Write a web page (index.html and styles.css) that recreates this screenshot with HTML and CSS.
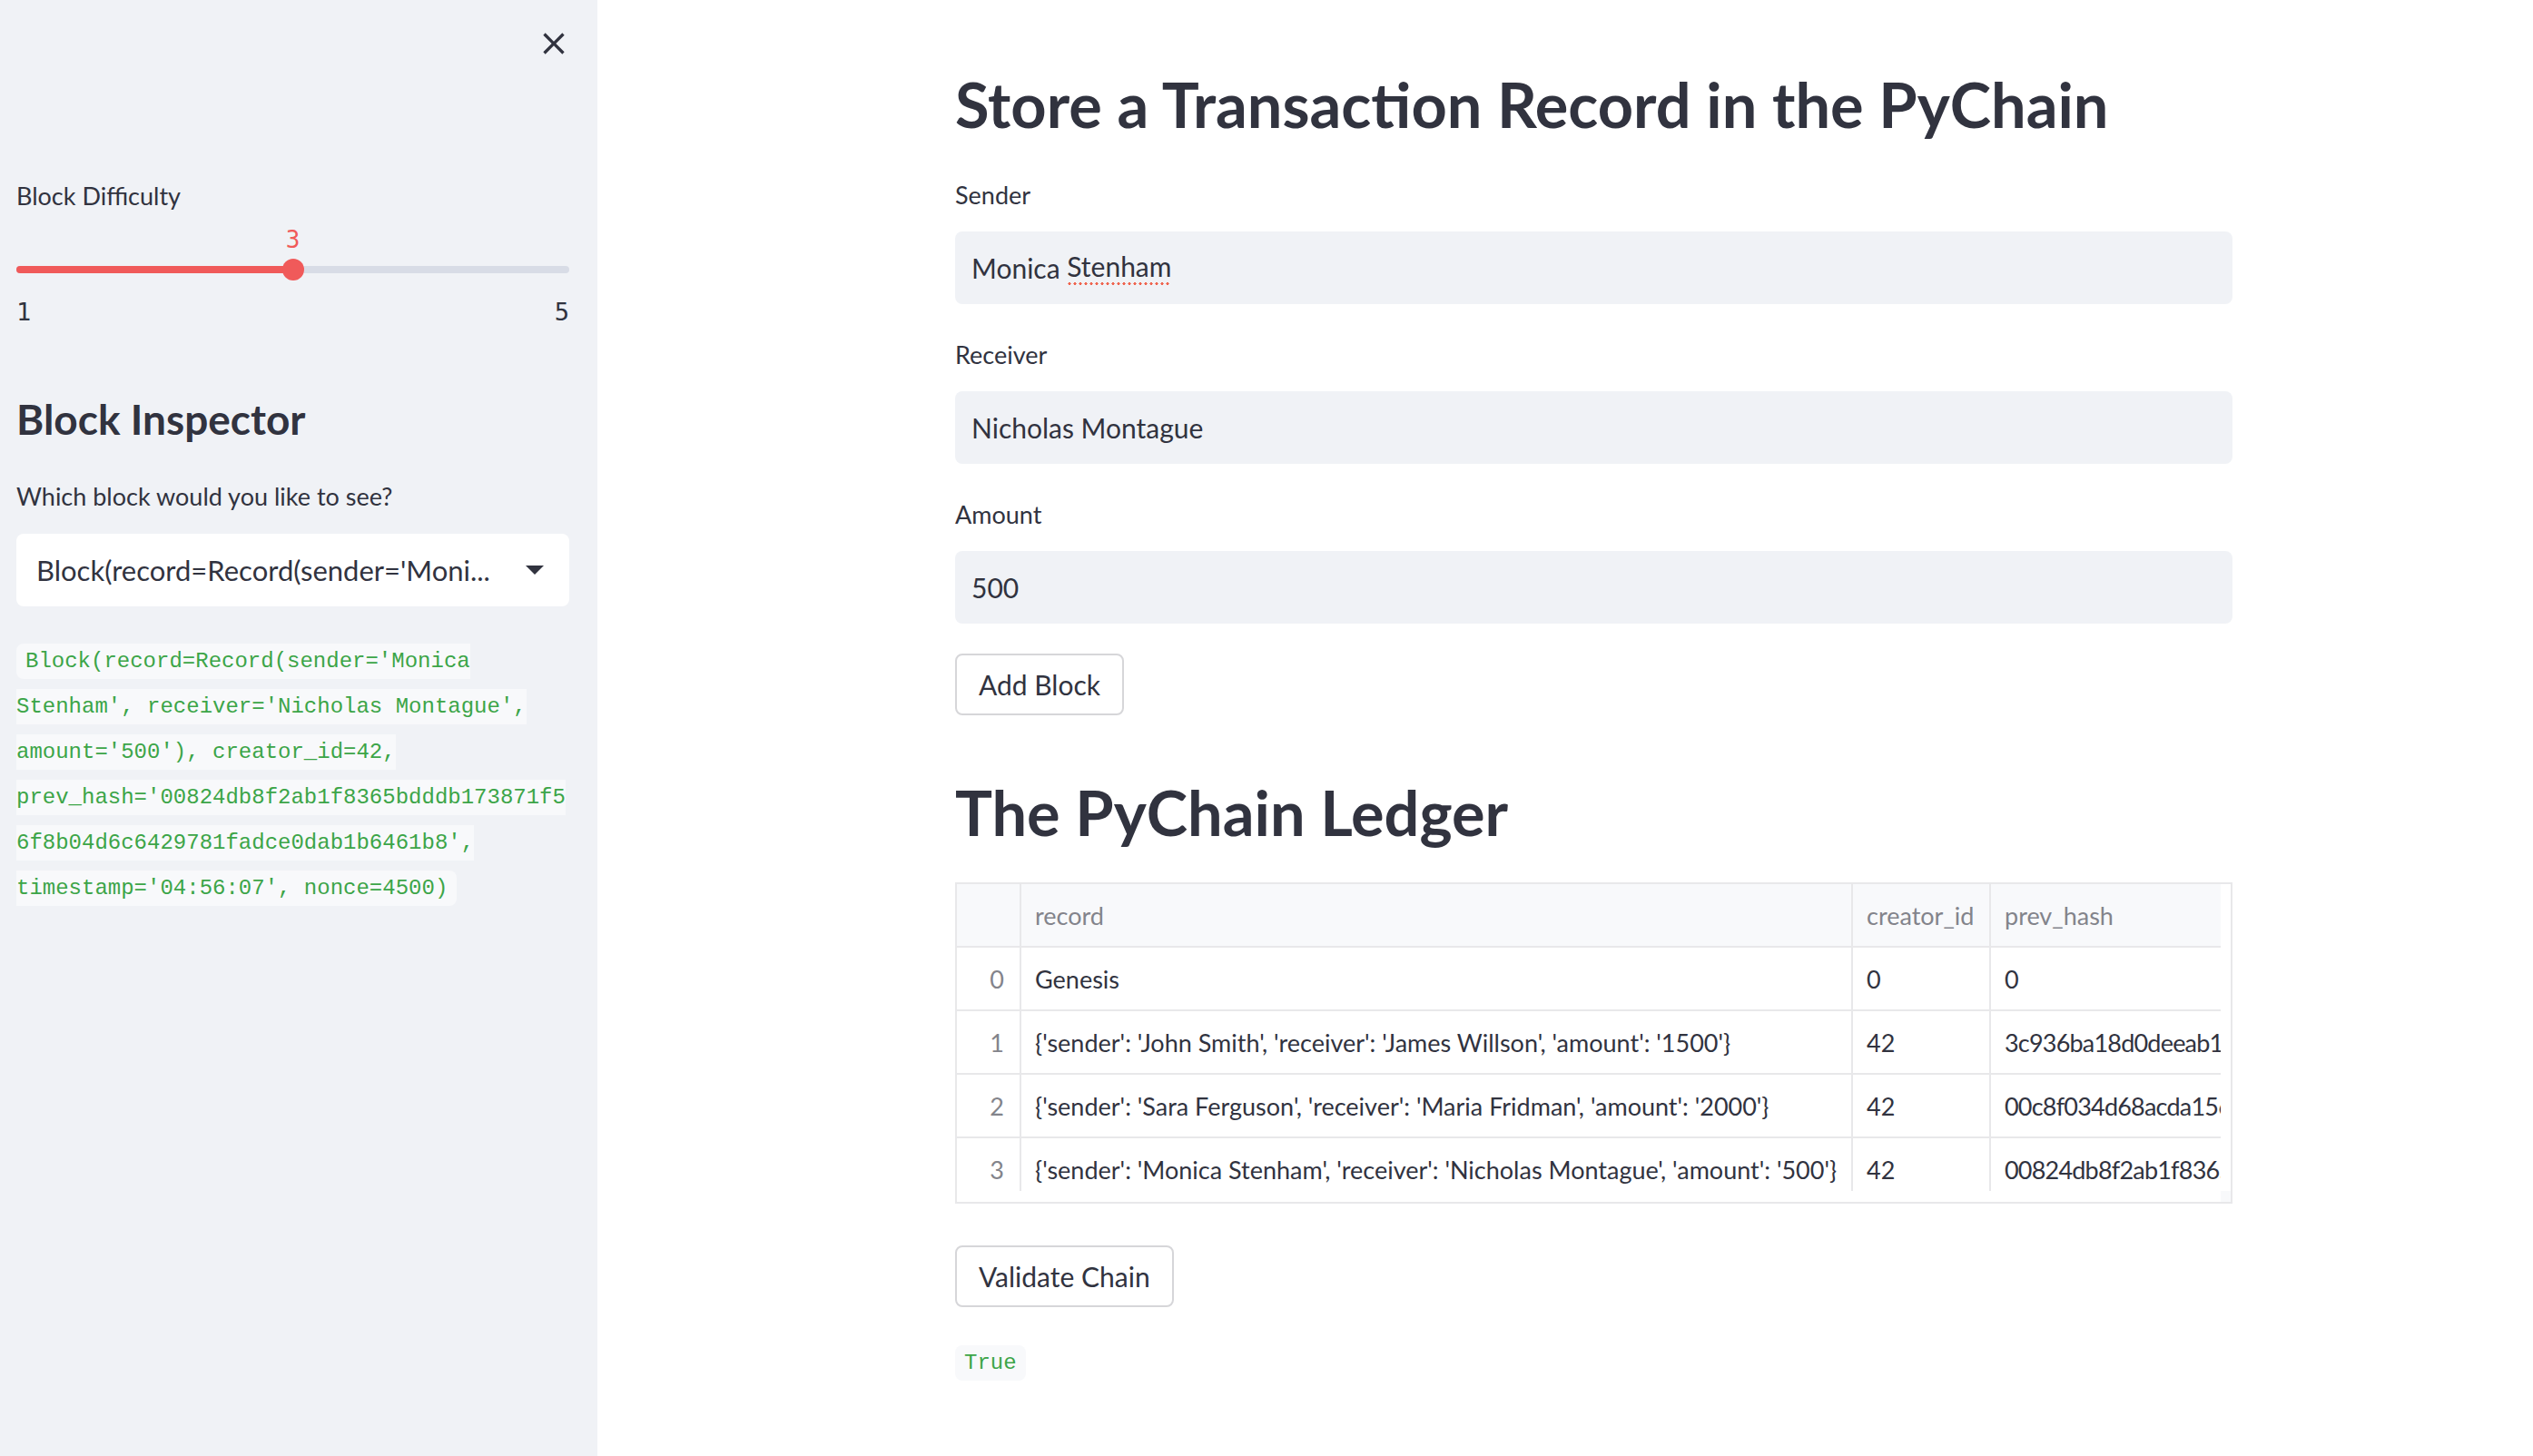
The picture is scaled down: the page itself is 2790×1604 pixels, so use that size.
FILE: index.html
```html
<!DOCTYPE html>
<html lang="en">
<head>
<meta charset="utf-8">
<title>PyChain</title>
<link rel="stylesheet" href="styles.css">
</head>
<body>
<div class="app">
  <aside class="sidebar">
    <div class="sb-header">
      <button class="close-btn" aria-label="Close sidebar">
        <svg viewBox="0 0 24 24" width="40" height="40"><path d="M19 6.41L17.59 5 12 10.59 6.41 5 5 6.41 10.59 12 5 17.59 6.41 19 12 13.41 17.59 19 19 17.59 13.41 12z" fill="#31333f"/></svg>
      </button>
    </div>

    <div class="slider-widget">
      <div class="widget-label">Block Difficulty</div>
      <div class="slider">
        <div class="slider-track">
          <div class="slider-fill" style="width:50%"></div>
          <div class="slider-thumb" style="left:50%"><span class="slider-value">3</span></div>
        </div>
        <div class="slider-ticks"><span>1</span><span>5</span></div>
      </div>
    </div>

    <h2 class="sb-heading">Block Inspector</h2>

    <div class="select-widget">
      <div class="widget-label">Which block would you like to see?</div>
      <div class="select-box">
        <span class="select-value">Block(record=Record(sender='Moni...</span>
        <svg class="select-arrow" viewBox="0 0 20 10" width="20" height="10"><path d="M0 0 L20 0 L10 10 Z" fill="#31333f"/></svg>
      </div>
    </div>

    <p class="code-para"><code class="inline-code">Block(record=Record(sender='Monica<br>Stenham', receiver='Nicholas Montague',<br>amount='500'), creator_id=42,<br>prev_hash='00824db8f2ab1f8365bdddb173871f5<br>6f8b04d6c6429781fadce0dab1b6461b8',<br>timestamp='04:56:07', nonce=4500)</code></p>
  </aside>

  <main class="main">
    <div class="block-container">
      <h1 class="page-title">Store a Transaction Record in the PyChain</h1>

      <div class="form">
        <div class="field">
          <div class="widget-label">Sender</div>
          <div class="text-input">Monica <span class="misspelled">Stenham</span></div>
        </div>
        <div class="field">
          <div class="widget-label">Receiver</div>
          <div class="text-input">Nicholas Montague</div>
        </div>
        <div class="field">
          <div class="widget-label">Amount</div>
          <div class="text-input">500</div>
        </div>
      </div>

      <button class="btn btn-add">Add Block</button>

      <h1 class="section-title">The PyChain Ledger</h1>

      <div class="table-frame">
        <div class="table-viewport">
          <div class="trow thead">
            <div class="cell idx"></div>
            <div class="cell">record</div>
            <div class="cell">creator_id</div>
            <div class="cell">prev_hash</div>
          </div>
          <div class="trow">
            <div class="cell idx">0</div>
            <div class="cell">Genesis</div>
            <div class="cell">0</div>
            <div class="cell">0</div>
          </div>
          <div class="trow">
            <div class="cell idx">1</div>
            <div class="cell">{'sender': 'John Smith', 'receiver': 'James Willson', 'amount': '1500'}</div>
            <div class="cell">42</div>
            <div class="cell hash">3c936ba18d0deeab1</div>
          </div>
          <div class="trow">
            <div class="cell idx">2</div>
            <div class="cell">{'sender': 'Sara Ferguson', 'receiver': 'Maria Fridman', 'amount': '2000'}</div>
            <div class="cell">42</div>
            <div class="cell hash">00c8f034d68acda156</div>
          </div>
          <div class="trow">
            <div class="cell idx">3</div>
            <div class="cell">{'sender': 'Monica Stenham', 'receiver': 'Nicholas Montague', 'amount': '500'}</div>
            <div class="cell">42</div>
            <div class="cell hash">00824db8f2ab1f8365bdddb173871f56f8b04d6c6429781fadce0dab1b6461b8</div>
          </div>
        </div>
      </div>

      <button class="btn btn-validate">Validate Chain</button>

      <p class="code-para result"><code class="inline-code">True</code></p>
    </div>
  </main>
</div>
</body>
</html>
```

FILE: styles.css
```css
* {
  box-sizing: border-box;
}

html, body {
  margin: 0;
  padding: 0;
  background: #ffffff;
}

body {
  font-family: Lato, "Noto Sans", sans-serif;
  color: #31333f;
  font-size: 30px;
}

.app {
  display: flex;
  min-height: 1604px;
}

/* ---------- Sidebar ---------- */
.sidebar {
  width: 658px;
  flex: 0 0 658px;
  background: #f0f2f6;
  padding: 0 31px 0 18px;
}

.sb-header {
  height: 96px;
  display: flex;
  justify-content: flex-end;
  align-items: center;
  margin-right: -3px;
}

.close-btn {
  border: none;
  background: transparent;
  padding: 0;
  width: 40px;
  height: 40px;
  display: flex;
  cursor: pointer;
}

.widget-label {
  font-size: 27px;
  line-height: 40px;
  color: #31333f;
}

.slider-widget {
  margin-top: 100px;
}

.slider {
  padding-top: 57px;
}

.slider-track {
  position: relative;
  height: 8px;
  border-radius: 4px;
  background: #d8dce6;
}

.slider-fill {
  height: 100%;
  background: #f05a5a;
  border-radius: 4px;
}

.slider-thumb {
  position: absolute;
  top: 50%;
  width: 24px;
  height: 24px;
  margin-left: -12px;
  margin-top: -12px;
  border-radius: 50%;
  background: #f05a5a;
}

.slider-value {
  position: absolute;
  left: 50%;
  bottom: calc(100% + 6px);
  transform: translateX(-50%);
  font-family: "DejaVu Sans Mono", "Liberation Mono", monospace;
  font-size: 26px;
  line-height: 30px;
  color: #f05a5a;
}

.slider-ticks {
  display: flex;
  justify-content: space-between;
  margin-top: 25px;
  font-family: "DejaVu Sans Mono", "Liberation Mono", monospace;
  font-size: 27px;
  line-height: 36px;
  color: #31333f;
}

.sb-heading {
  margin: 70px 0 0 0;
  font-size: 46px;
  line-height: 60px;
  font-weight: 700;
  color: #31333f;
}

.select-widget {
  margin-top: 35px;
}

.select-box {
  margin-top: 21px;
  height: 80px;
  background: #ffffff;
  border-radius: 8px;
  display: flex;
  align-items: center;
  justify-content: space-between;
  padding: 0 28px 0 22px;
}

.select-value {
  font-size: 31px;
  white-space: nowrap;
  overflow: hidden;
}

.select-arrow {
  flex: 0 0 auto;
}

.code-para {
  margin: 36px 0 0 0;
  font-family: "Liberation Mono", "DejaVu Sans Mono", monospace;
  font-size: 24px;
  line-height: 50px;
}

.inline-code {
  font-family: "Liberation Mono", "DejaVu Sans Mono", monospace;
  font-size: 24px;
  color: #3ca548;
  background: #f8f9fb;
  padding: 6px 10px;
  border-radius: 8px;
}

/* ---------- Main ---------- */
.main {
  flex: 1;
  padding: 73px 0 0 394px;
}

.block-container {
  width: 1407px;
}

.page-title,
.section-title {
  font-size: 68.5px;
  line-height: 84px;
  font-weight: 700;
  color: #31333f;
  margin: 0;
}

.form {
  margin-top: 38px;
  display: flex;
  flex-direction: column;
  gap: 36px;
}

.field .widget-label {
  margin-bottom: 20px;
}

.text-input {
  height: 80px;
  background: #f0f2f6;
  border-radius: 8px;
  display: flex;
  align-items: center;
  padding: 0 18px;
  font-size: 30px;
  white-space: pre;
}

.misspelled {
  background-image: radial-gradient(circle, #ef6550 1.4px, transparent 1.8px);
  background-repeat: repeat-x;
  background-size: 6px 5px;
  background-position: 0 100%;
  padding-bottom: 4px;
}

.btn {
  display: flex;
  align-items: center;
  height: 68px;
  padding: 0 24px;
  background: #ffffff;
  border: 2px solid #d6d6d9;
  border-radius: 8px;
  font-family: Lato, "Noto Sans", sans-serif;
  font-size: 30px;
  color: #31333f;
  cursor: pointer;
}

.btn-add {
  margin-top: 33px;
}

.section-title {
  margin-top: 65px;
}

.table-frame {
  position: relative;
  margin-top: 35px;
  width: 1407px;
  height: 354px;
  border: 2px solid #e8e8ea;
  padding: 0 11px 12px 0;
}

.table-frame::after {
  content: "";
  position: absolute;
  right: 0;
  bottom: 0;
  width: 11px;
  height: 12px;
  background: #f8f9fb;
}

.table-viewport {
  width: 100%;
  height: 100%;
  overflow: hidden;
}

.trow {
  display: grid;
  grid-template-columns: 71px 916px 152px 400px;
  width: 1539px;
  height: 70px;
  border-bottom: 2px solid #e8e8ea;
}

.thead {
  background: #f8f9fb;
}

.cell {
  border-right: 2px solid #e8e8ea;
  padding: 0 0 0 15px;
  display: flex;
  align-items: center;
  font-size: 27px;
  white-space: nowrap;
  overflow: hidden;
  color: #31333f;
}

.cell.hash {
  letter-spacing: -0.8px;
}

.thead .cell {
  color: #83848b;
}

.cell.idx {
  justify-content: flex-end;
  padding: 0 17px 0 0;
  color: #83848b;
}

.btn-validate {
  margin-top: 46px;
}

.result {
  margin-top: 37px;
}
```
